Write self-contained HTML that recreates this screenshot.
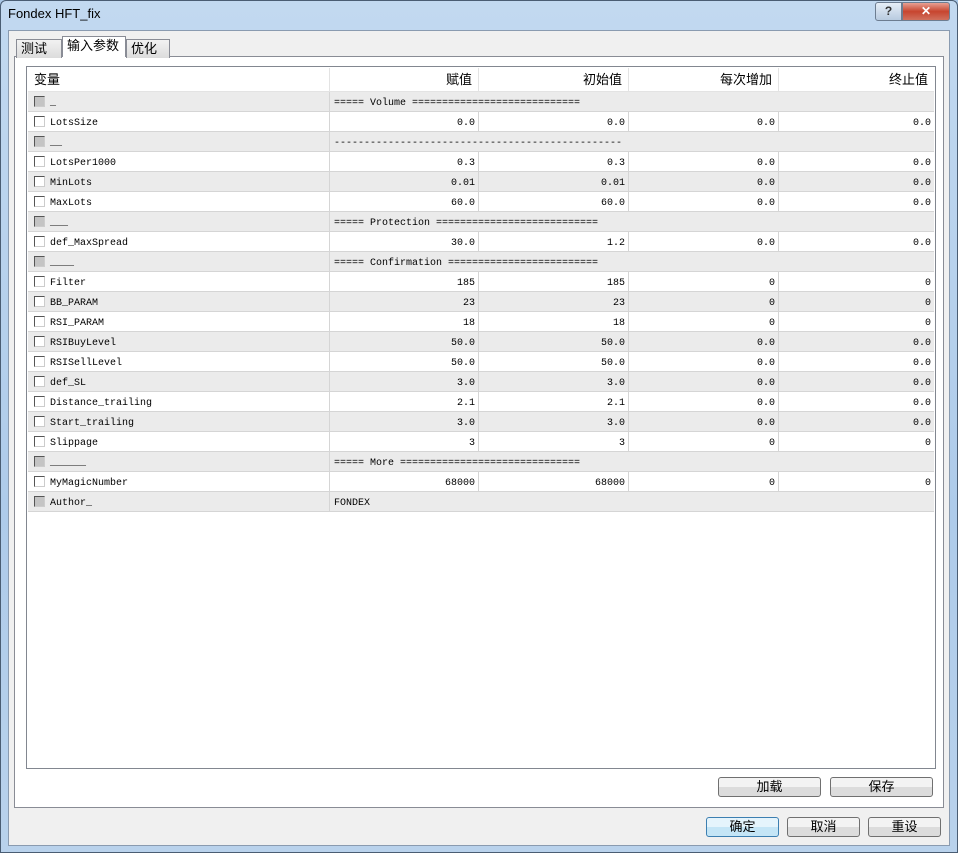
<!DOCTYPE html><html><head><meta charset="utf-8"><style>
*{margin:0;padding:0;box-sizing:border-box}
body{width:958px;height:853px;overflow:hidden;background:#a9c7e6;font-family:"Liberation Sans","Noto Sans CJK SC",sans-serif;position:relative}
.frame{position:absolute;left:0;top:0;width:958px;height:853px;background:linear-gradient(#c2d9f0,#aecbea 60%,#b9d2ec);border:1px solid #4a5d73;border-radius:6px 6px 0 0}
.title{position:absolute;left:8px;top:6px;font-size:13px;color:#000}
.client{position:absolute;left:8px;top:30px;width:942px;height:816px;background:#f0f0f0;border:1px solid #8a9bb0}
.tab{position:absolute;top:38px;height:19px;border:1px solid #898c95;border-bottom:none;background:linear-gradient(#f2f2f2,#dcdcdc);font-size:13px;padding:0 4px;line-height:18px}
.panel{position:absolute;left:14px;top:56px;width:930px;height:752px;background:#fff;border:1px solid #898c95}
.list{position:absolute;left:26px;top:66px;width:910px;height:703px;border:1px solid #828790;background:#fff}
.row{position:absolute;left:1px;width:906px;height:20px;border-bottom:1px solid #d5d5d5;font-family:"Liberation Mono","Noto Sans CJK SC",monospace;font-size:10px;line-height:19px}
.g{background:#ebebeb}
.c{position:absolute;top:0;height:19px;border-right:1px solid #d5d5d5;text-align:right;padding-right:3px;padding-top:2px}
.cb{position:absolute;left:6px;top:4px;width:11px;height:11px;border:1px solid #555;border-right-color:#ccc;border-bottom-color:#ccc;background:#fff}
.g .cb.s{background:#c4c4c4}
.name{position:absolute;left:22px;top:2px}
.hdr{position:absolute;left:1px;top:1px;width:906px;height:24px;border-bottom:1px solid #e3e3e3;font-size:13px;line-height:24px;background:#fff}
.hdr div{position:absolute;top:0;height:24px;border-right:1px solid #e3e3e3;text-align:right;padding-right:6px}
.btn{position:absolute;height:20px;border:1px solid #707070;border-radius:3px;background:linear-gradient(#f3f3f3 50%,#dcdcdc 50%);font-size:13px;text-align:center;line-height:18px}
.ctl{position:absolute;top:2px;height:19px;border:1px solid #6d7d91;font-size:12px;color:#fff;text-align:center;line-height:17px;font-weight:bold}
</style></head><body>
<div class="frame"></div>
<div class="title">Fondex HFT_fix</div>
<div class="ctl" style="left:875px;width:27px;border-radius:3px 0 0 3px;background:linear-gradient(#e6eef7,#b8cbe0);color:#333">?</div>
<div class="ctl" style="left:902px;width:48px;border-radius:0 3px 3px 0;background:linear-gradient(#e8a093,#c7452f 50%,#d0705d)">✕</div>
<div class="client"></div>
<div class="panel"></div>
<div class="tab" style="left:16px;width:46px;top:39px">测试</div>
<div class="tab" style="left:126px;width:44px;top:39px">优化</div>
<div class="tab" style="left:62px;width:64px;top:36px;height:21px;background:#fff;z-index:2">输入参数</div>
<div class="list">
<div class="hdr"><div style="left:0;width:302px;text-align:left;padding-left:6px">变量</div><div style="left:302px;width:149px">赋值</div><div style="left:451px;width:150px">初始值</div><div style="left:601px;width:150px">每次增加</div><div style="left:751px;width:155px;border:none">终止值</div></div>
<div id="rows"></div>
</div>
<div class="btn" style="left:718px;top:777px;width:103px">加载</div>
<div class="btn" style="left:830px;top:777px;width:103px">保存</div>
<div class="btn" style="left:706px;top:817px;width:73px;border-color:#3c7fb1;background:linear-gradient(#e5f4fc 50%,#c4e5f6 50%)">确定</div>
<div class="btn" style="left:787px;top:817px;width:73px">取消</div>
<div class="btn" style="left:868px;top:817px;width:73px">重设</div>
<script>
var d=[["_","===== Volume ============================"],["LotsSize","0.0","0.0","0.0","0.0"],["__","------------------------------------------------"],["LotsPer1000","0.3","0.3","0.0","0.0"],["MinLots","0.01","0.01","0.0","0.0"],["MaxLots","60.0","60.0","0.0","0.0"],["___","===== Protection ==========================="],["def_MaxSpread","30.0","1.2","0.0","0.0"],["____","===== Confirmation ========================="],["Filter","185","185","0","0"],["BB_PARAM","23","23","0","0"],["RSI_PARAM","18","18","0","0"],["RSIBuyLevel","50.0","50.0","0.0","0.0"],["RSISellLevel","50.0","50.0","0.0","0.0"],["def_SL","3.0","3.0","0.0","0.0"],["Distance_trailing","2.1","2.1","0.0","0.0"],["Start_trailing","3.0","3.0","0.0","0.0"],["Slippage","3","3","0","0"],["______","===== More =============================="],["MyMagicNumber","68000","68000","0","0"],["Author_","FONDEX"]];
var h="";d.forEach(function(r,i){var g=i%2==0;h+='<div class="row'+(g?' g':'')+'" style="top:'+(25+i*20)+'px"><div class="c" style="left:0;width:302px"></div><div class="cb'+(r.length==2?' s':'')+'"></div><div class="name">'+r[0]+'</div>';
if(r.length==2){h+='<div style="position:absolute;left:306px;top:2px">'+r[1]+'</div>';}
else{h+='<div class="c" style="left:302px;width:149px">'+r[1]+'</div><div class="c" style="left:451px;width:150px">'+r[2]+'</div><div class="c" style="left:601px;width:150px">'+r[3]+'</div><div class="c" style="left:751px;width:155px;border:none">'+r[4]+'</div>';}
h+='</div>';});document.getElementById("rows").innerHTML=h;
</script>
</body></html>
